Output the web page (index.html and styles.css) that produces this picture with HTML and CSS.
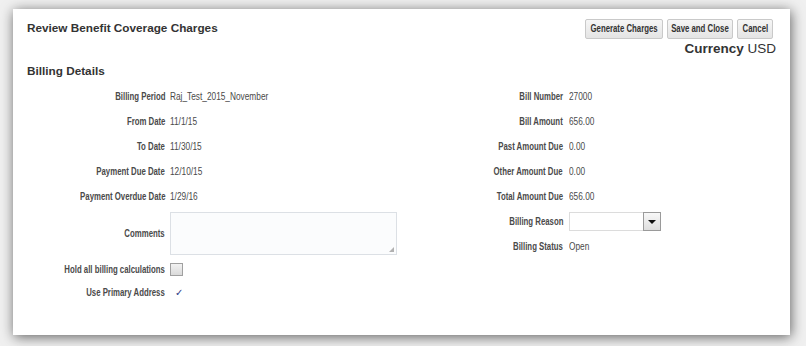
FILE: index.html
```html
<!DOCTYPE html>
<html>
<head>
<meta charset="utf-8">
<link rel="stylesheet" href="styles.css">
</head>
<body>
<div class="panel">
  <div class="header">
    <h1 class="title">Review Benefit Coverage Charges</h1>
    <div class="actions">
      <div class="buttons">
        <button class="btn btn-gen"><span class="nx">Generate Charges</span></button>
        <button class="btn btn-save"><span class="nx">Save and Close</span></button>
        <button class="btn btn-cancel"><span class="nx">Cancel</span></button>
      </div>
      <div class="currency"><b>Currency</b> USD</div>
    </div>
  </div>
  <h2 class="section">Billing Details</h2>
  <div class="forms">
    <div class="form form-left">
      <div class="lbl"><span class="nl">Billing Period</span></div><div class="val"><span class="nv">Raj_Test_2015_November</span></div>
      <div class="lbl"><span class="nl">From Date</span></div><div class="val"><span class="nv">11/1/15</span></div>
      <div class="lbl"><span class="nl">To Date</span></div><div class="val"><span class="nv">11/30/15</span></div>
      <div class="lbl"><span class="nl">Payment Due Date</span></div><div class="val"><span class="nv">12/10/15</span></div>
      <div class="lbl"><span class="nl">Payment Overdue Date</span></div><div class="val"><span class="nv">1/29/16</span></div>
      <div class="lbl"><span class="nl">Comments</span></div><div class="val"><div class="textarea"><span class="grip"></span></div></div>
      <div class="lbl"><span class="nl">Hold all billing calculations</span></div><div class="val"><span class="checkbox"></span></div>
      <div class="lbl"><span class="nl">Use Primary Address</span></div><div class="val"><span class="check">&#10003;</span></div>
    </div>
    <div class="form form-right">
      <div class="lbl"><span class="nl">Bill Number</span></div><div class="val"><span class="nv">27000</span></div>
      <div class="lbl"><span class="nl">Bill Amount</span></div><div class="val"><span class="nv">656.00</span></div>
      <div class="lbl"><span class="nl">Past Amount Due</span></div><div class="val"><span class="nv">0.00</span></div>
      <div class="lbl"><span class="nl">Other Amount Due</span></div><div class="val"><span class="nv">0.00</span></div>
      <div class="lbl"><span class="nl">Total Amount Due</span></div><div class="val"><span class="nv">656.00</span></div>
      <div class="lbl"><span class="nl">Billing Reason</span></div><div class="val"><div class="select"><span class="sel-btn"><span class="tri"></span></span></div></div>
      <div class="lbl"><span class="nl">Billing Status</span></div><div class="val"><span class="nv">Open</span></div>
    </div>
  </div>
</div>
</body>
</html>
```
FILE: styles.css
```css
html, body {
  margin: 0;
  padding: 0;
}
body {
  background: #f0f0f0;
  width: 806px;
  height: 346px;
  overflow: hidden;
  padding-top: 9px;
  box-sizing: border-box;
  font-family: "Liberation Sans", Arial, sans-serif;
}
.panel {
  margin: 0 16px 0 13px;
  height: 326px;
  background: #fff;
  box-shadow: 1px 2px 12px rgba(0, 0, 0, 0.6);
  padding: 10px 17px 0 14px;
  box-sizing: border-box;
  color: #333;
}
.header {
  display: flex;
  justify-content: space-between;
  align-items: flex-start;
}
.title {
  margin: 0;
  font-size: 11.75px;
  line-height: 18px;
  font-weight: bold;
  color: #333;
}
.actions {
  display: flex;
  flex-direction: column;
  align-items: flex-end;
}
.buttons {
  display: flex;
  gap: 4px;
}
.btn {
  height: 20px;
  padding: 0;
  border: 1px solid #c9c9c9;
  border-radius: 2px;
  background: linear-gradient(#f6f6f6, #e4e4e4);
  font-family: "Liberation Sans", Arial, sans-serif;
  font-weight: bold;
  font-size: 10px;
  color: #333;
  line-height: 18px;
  white-space: nowrap;
  display: flex;
  justify-content: center;
  align-items: center;
  overflow: visible;
}
.btn-gen { width: 78px; }
.btn-save { width: 66px; }
.btn-cancel { width: 36px; }
.nx {
  display: inline-block;
  transform: scaleX(0.78);
  transform-origin: center;
}
.currency {
  margin-top: 2px;
  margin-right: -3px;
  font-size: 13.5px;
  line-height: 16px;
  color: #333;
}
.section {
  margin: 5px 0 0 0;
  font-size: 11.75px;
  line-height: 18px;
  font-weight: bold;
  color: #333;
}
.forms {
  margin-top: 4px;
  display: flex;
}
.form {
  display: grid;
  align-items: center;
  font-family: "Liberation Sans", Arial, sans-serif;
  font-size: 10px;
  white-space: nowrap;
}
.form-left {
  width: 386px;
  grid-template-columns: 138px 1fr;
  column-gap: 5px;
  grid-template-rows: repeat(5, 25px) 49px 23px 22px;
}
.form-right {
  grid-template-columns: 150px 1fr;
  column-gap: 6px;
  grid-auto-rows: 25px;
}
.lbl {
  text-align: right;
  font-weight: bold;
  color: #4a4a4a;
}
.nl {
  display: inline-block;
  transform: scaleX(0.78);
  transform-origin: right center;
}
.val {
  color: #4a4a4a;
}
.nv {
  display: inline-block;
  transform: scaleX(0.83);
  transform-origin: left center;
}
.textarea {
  position: relative;
  width: 227px;
  height: 43px;
  box-sizing: border-box;
  border: 1px solid #dce0e5;
  background: #fbfcfd;
}
.grip {
  position: absolute;
  right: 2px;
  bottom: 2px;
  width: 5px;
  height: 5px;
  background:
    radial-gradient(circle, #888 0.6px, transparent 0.9px) 0 0 / 2px 2px;
  clip-path: polygon(100% 0, 100% 100%, 0 100%);
}
.checkbox {
  display: block;
  width: 13px;
  height: 13px;
  box-sizing: border-box;
  border: 1px solid #a0a0a0;
  background: linear-gradient(#f2f2f2, #dadada);
}
.check {
  display: inline-block;
  margin-left: 5px;
  color: #2d3a85;
  font-family: "DejaVu Sans", sans-serif;
  font-size: 10px;
  font-weight: bold;
}
.select {
  position: relative;
  width: 92px;
  height: 19px;
  box-sizing: border-box;
  border: 1px solid #dcdcdc;
  background: #fff;
}
.sel-btn {
  position: absolute;
  right: -1px;
  top: -1px;
  width: 18px;
  height: 19px;
  box-sizing: border-box;
  border: 1px solid #9a9a9a;
  background: linear-gradient(#f8f8f8, #dedede);
  display: flex;
  align-items: center;
  justify-content: center;
}
.tri {
  width: 0;
  height: 0;
  border-left: 4px solid transparent;
  border-right: 4px solid transparent;
  border-top: 4px solid #111;
}
```
